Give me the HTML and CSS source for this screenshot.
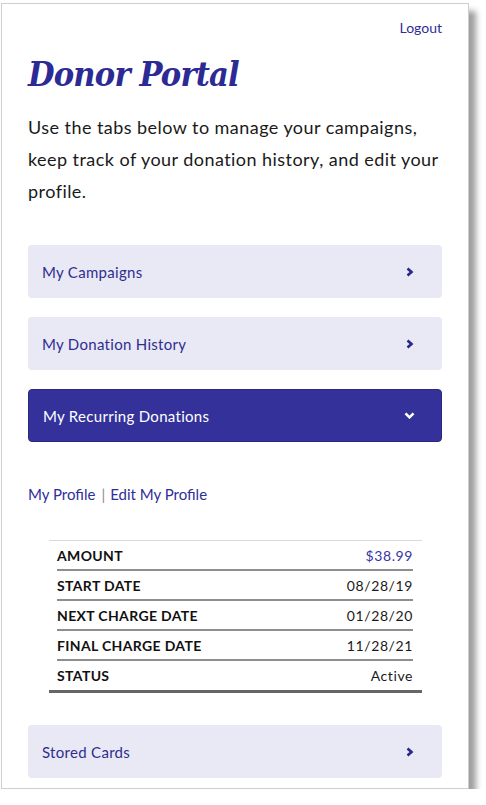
FILE: index.html
```html
<!DOCTYPE html>
<html lang="en">
<head>
<meta charset="utf-8">
<title>Donor Portal</title>
<link rel="stylesheet" href="styles.css">
</head>
<body>
<div class="frame">
  <div class="topbar"><a class="logout" href="#">Logout</a></div>
  <h1 class="title">Donor Portal</h1>
  <p class="intro">Use the tabs below to manage your campaigns, keep track of your donation history, and edit your profile.</p>

  <div class="tabs">
    <a class="tab" href="#"><span>My Campaigns</span>
      <svg class="chev" width="8" height="10" viewBox="0 0 8 10"><polyline points="1.5,1.5 5.5,5 1.5,8.5" fill="none" stroke="currentColor" stroke-width="2.6" stroke-linejoin="miter" stroke-linecap="butt"/></svg>
    </a>
    <a class="tab" href="#"><span>My Donation History</span>
      <svg class="chev" width="8" height="10" viewBox="0 0 8 10"><polyline points="1.5,1.5 5.5,5 1.5,8.5" fill="none" stroke="currentColor" stroke-width="2.6" stroke-linejoin="miter" stroke-linecap="butt"/></svg>
    </a>
    <a class="tab active" href="#"><span>My Recurring Donations</span>
      <svg class="chev-down" width="11" height="7" viewBox="0 0 11 7"><polyline points="1.5,1.3 5.5,5.3 9.5,1.3" fill="none" stroke="currentColor" stroke-width="2.6" stroke-linejoin="miter" stroke-linecap="butt"/></svg>
    </a>
  </div>

  <div class="profile-links">
    <a href="#">My Profile</a><span class="sep">|</span><a href="#">Edit My Profile</a>
  </div>

  <div class="details">
    <div class="row"><span class="label">AMOUNT</span><span class="value amount">$38.99</span></div>
    <div class="row"><span class="label">START DATE</span><span class="value">08/28/19</span></div>
    <div class="row"><span class="label">NEXT CHARGE DATE</span><span class="value">01/28/20</span></div>
    <div class="row"><span class="label">FINAL CHARGE DATE</span><span class="value">11/28/21</span></div>
    <div class="row last"><span class="label">STATUS</span><span class="value">Active</span></div>
  </div>

  <a class="tab stored" href="#"><span>Stored Cards</span>
    <svg class="chev" width="8" height="10" viewBox="0 0 8 10"><polyline points="1.5,1.5 5.5,5 1.5,8.5" fill="none" stroke="currentColor" stroke-width="2.6" stroke-linejoin="miter" stroke-linecap="butt"/></svg>
  </a>
</div>
</body>
</html>
```

FILE: styles.css
```css
html, body {
  margin: 0;
  padding: 0;
  background: #ffffff;
}

body {
  font-family: "Lato", "Open Sans", sans-serif;
  color: #1a1a1a;
}

a {
  text-decoration: none;
}

.frame {
  box-sizing: border-box;
  width: 468px;
  margin: 3px 0 0 1px;
  border: 1px solid #cfcfcf;
  background: #fff;
  box-shadow: 7px 8px 6px rgba(0, 0, 0, 0.38);
  padding: 0 26px 10px 26px;
}

.topbar {
  display: flex;
  justify-content: flex-end;
  padding-top: 14px;
}

.logout {
  color: #2f2e93;
  font-size: 14px;
  line-height: 20px;
}

.title {
  margin: 16px 0 0 0;
  font-family: "DejaVu Serif Condensed", "DejaVu Serif", serif;
  font-stretch: condensed;
  font-style: italic;
  font-weight: bold;
  font-size: 34px;
  line-height: 40px;
  color: #2c2a94;
  letter-spacing: -0.8px;
}

.intro {
  margin: 17px 0 0 0;
  font-size: 18px;
  line-height: 32px;
  letter-spacing: 0.45px;
  color: #1a1a1a;
}

.tabs {
  display: flex;
  flex-direction: column;
  gap: 19px;
  margin-top: 38px;
}

.tab {
  display: flex;
  align-items: center;
  justify-content: space-between;
  height: 53px;
  box-sizing: border-box;
  padding: 0 28px 0 14px;
  border-radius: 4px;
  background: #e9e8f5;
  color: #2f2e8f;
  font-size: 15px;
  letter-spacing: 0.3px;
}

.tab .chev {
  color: #27268a;
}

.tab.active {
  background: #34329a;
  color: #ffffff;
  border: 1px solid #2a2880;
  padding-right: 26px;
}

.tab.active .chev-down {
  color: #ffffff;
}

.profile-links {
  margin-top: 42px;
  font-size: 15px;
  line-height: 20px;
  display: flex;
  align-items: center;
}

.profile-links a {
  color: #2f2e9a;
}

.sep {
  color: #8a8a8a;
  margin: 0 5px 0 6px;
}

.details {
  margin: 36px 20px 0 21px;
  padding: 0 9px 0 8px;
  border-top: 1px solid #d9d9d9;
  border-bottom: 3px solid #666666;
}

.row {
  display: flex;
  justify-content: space-between;
  align-items: center;
  height: 30px;
  box-sizing: border-box;
  border-bottom: 2px solid #8e8e8e;
  font-size: 14px;
}

.row.last {
  border-bottom: none;
  height: 29px;
}

.label {
  font-weight: bold;
  color: #111;
  letter-spacing: 0.35px;
}

.value {
  color: #1a1a1a;
  letter-spacing: 0.6px;
}

.value.amount {
  color: #3534a6;
}

.stored {
  margin-top: 32px;
}
```
